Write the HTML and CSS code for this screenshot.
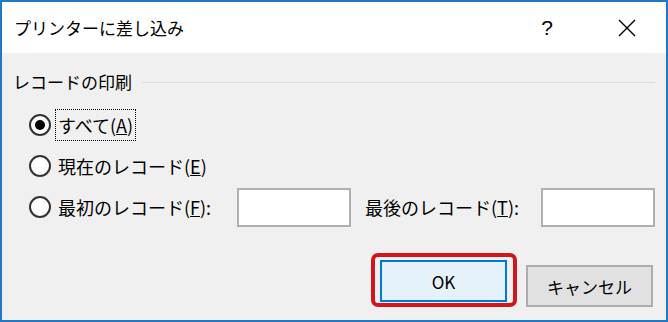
FILE: index.html
```html
<!DOCTYPE html>
<html lang="ja">
<head>
  <meta charset="UTF-8" />
  <title>プリンターに差し込み</title>
  <link rel="stylesheet" href="styles.css">
</head>
<body>
  <div class="window">
    <div class="titlebar">
      <span class="title">プリンターに差し込み</span>
      <span class="tb-help">?</span>
      <span class="tb-close">
        <svg width="18" height="18" viewBox="0 0 18 18">
          <path d="M1 1 L17 17 M17 1 L1 17" stroke="#000" stroke-width="1.4" fill="none"/>
        </svg>
      </span>
    </div>

    <div class="content">
      <div class="group-head">
        <span class="group-label">レコードの印刷</span>
        <span class="group-line"></span>
      </div>

      <div class="options">
        <div class="row">
          <span class="radio checked"></span>
          <span class="focus">すべて(<u>A</u>)</span>
        </div>
        <div class="row">
          <span class="radio"></span>
          <span class="label">現在のレコード(<u>E</u>)</span>
        </div>
        <div class="row">
          <span class="radio"></span>
          <span class="label label-from">最初のレコード(<u>F</u>):</span>
          <span class="textbox"></span>
          <span class="label label-to">最後のレコード(<u>T</u>):</span>
          <span class="textbox"></span>
        </div>
      </div>

      <div class="buttons">
        <span class="mark">
          <button class="btn btn-default">OK</button>
        </span>
        <button class="btn">キャンセル</button>
      </div>
    </div>
  </div>
</body>
</html>
```

FILE: styles.css
```css
body {
  margin: 0;
  font-family: "Noto Sans CJK JP", "Noto Sans", sans-serif;
  color: #000;
}
.window {
  width: 668px;
  height: 322px;
  box-sizing: border-box;
  border: 2px solid #2078c8;
  display: flex;
  flex-direction: column;
  background: #f0f0f0;
}
.titlebar {
  height: 51px;
  background: #fff;
  display: flex;
  align-items: center;
  padding-left: 12px;
}
.title {
  font-size: 17px;
  line-height: 20px;
  flex: 1;
}
.tb-help {
  width: 60px;
  text-align: center;
  font-family: "Liberation Sans", sans-serif;
  font-size: 21px;
}
.tb-close {
  width: 78px;
  margin-left: 11px;
  display: flex;
  justify-content: center;
}
.content {
  flex: 1;
  padding: 19px 11px 0 11px;
}
.group-head {
  display: flex;
  align-items: center;
  height: 20px;
}
.group-label {
  font-size: 17px;
  line-height: 20px;
}
.group-line {
  flex: 1;
  height: 1px;
  background: #dcdcdc;
  margin-left: 10px;
}
.options {
  margin-top: 13px;
  padding-left: 16px;
  display: flex;
  flex-direction: column;
  gap: 1px;
}
.row {
  height: 40px;
  display: flex;
  align-items: center;
  font-size: 18px;
  line-height: 20px;
}
.radio {
  width: 22px;
  height: 22px;
  box-sizing: border-box;
  border: 2px solid #333;
  border-radius: 50%;
  background: #fff;
  margin-right: 7px;
  display: flex;
  align-items: center;
  justify-content: center;
}
.radio.checked::after {
  content: "";
  width: 10px;
  height: 10px;
  border-radius: 50%;
  background: #000;
}
.focus {
  border: 1px dotted #000;
  padding: 5px 2px;
  margin-left: -3px;
}
.label-from {
  width: 179px;
}
.label-to {
  width: 176px;
  margin-left: 14px;
}
.textbox {
  width: 114px;
  height: 39px;
  box-sizing: border-box;
  border: 2px solid #b0b0b0;
  background: #fff;
}
.buttons {
  display: flex;
  justify-content: flex-end;
  align-items: flex-end;
  margin-top: 26px;
  padding-right: 2px;
  gap: 9px;
}
.mark {
  display: flex;
  border: 4px solid #d0161f;
  border-radius: 7px;
  padding: 3px 6px 1px 5px;
}
.btn {
  width: 127px;
  height: 42px;
  box-sizing: border-box;
  border: 2px solid #adadad;
  background: #e1e1e1;
  font-family: "Noto Sans CJK JP", sans-serif;
  font-size: 17px;
  padding: 0;
  color: #000;
}
.btn-default {
  border-color: #0078d7;
  background: #e5f1fb;
}
```
